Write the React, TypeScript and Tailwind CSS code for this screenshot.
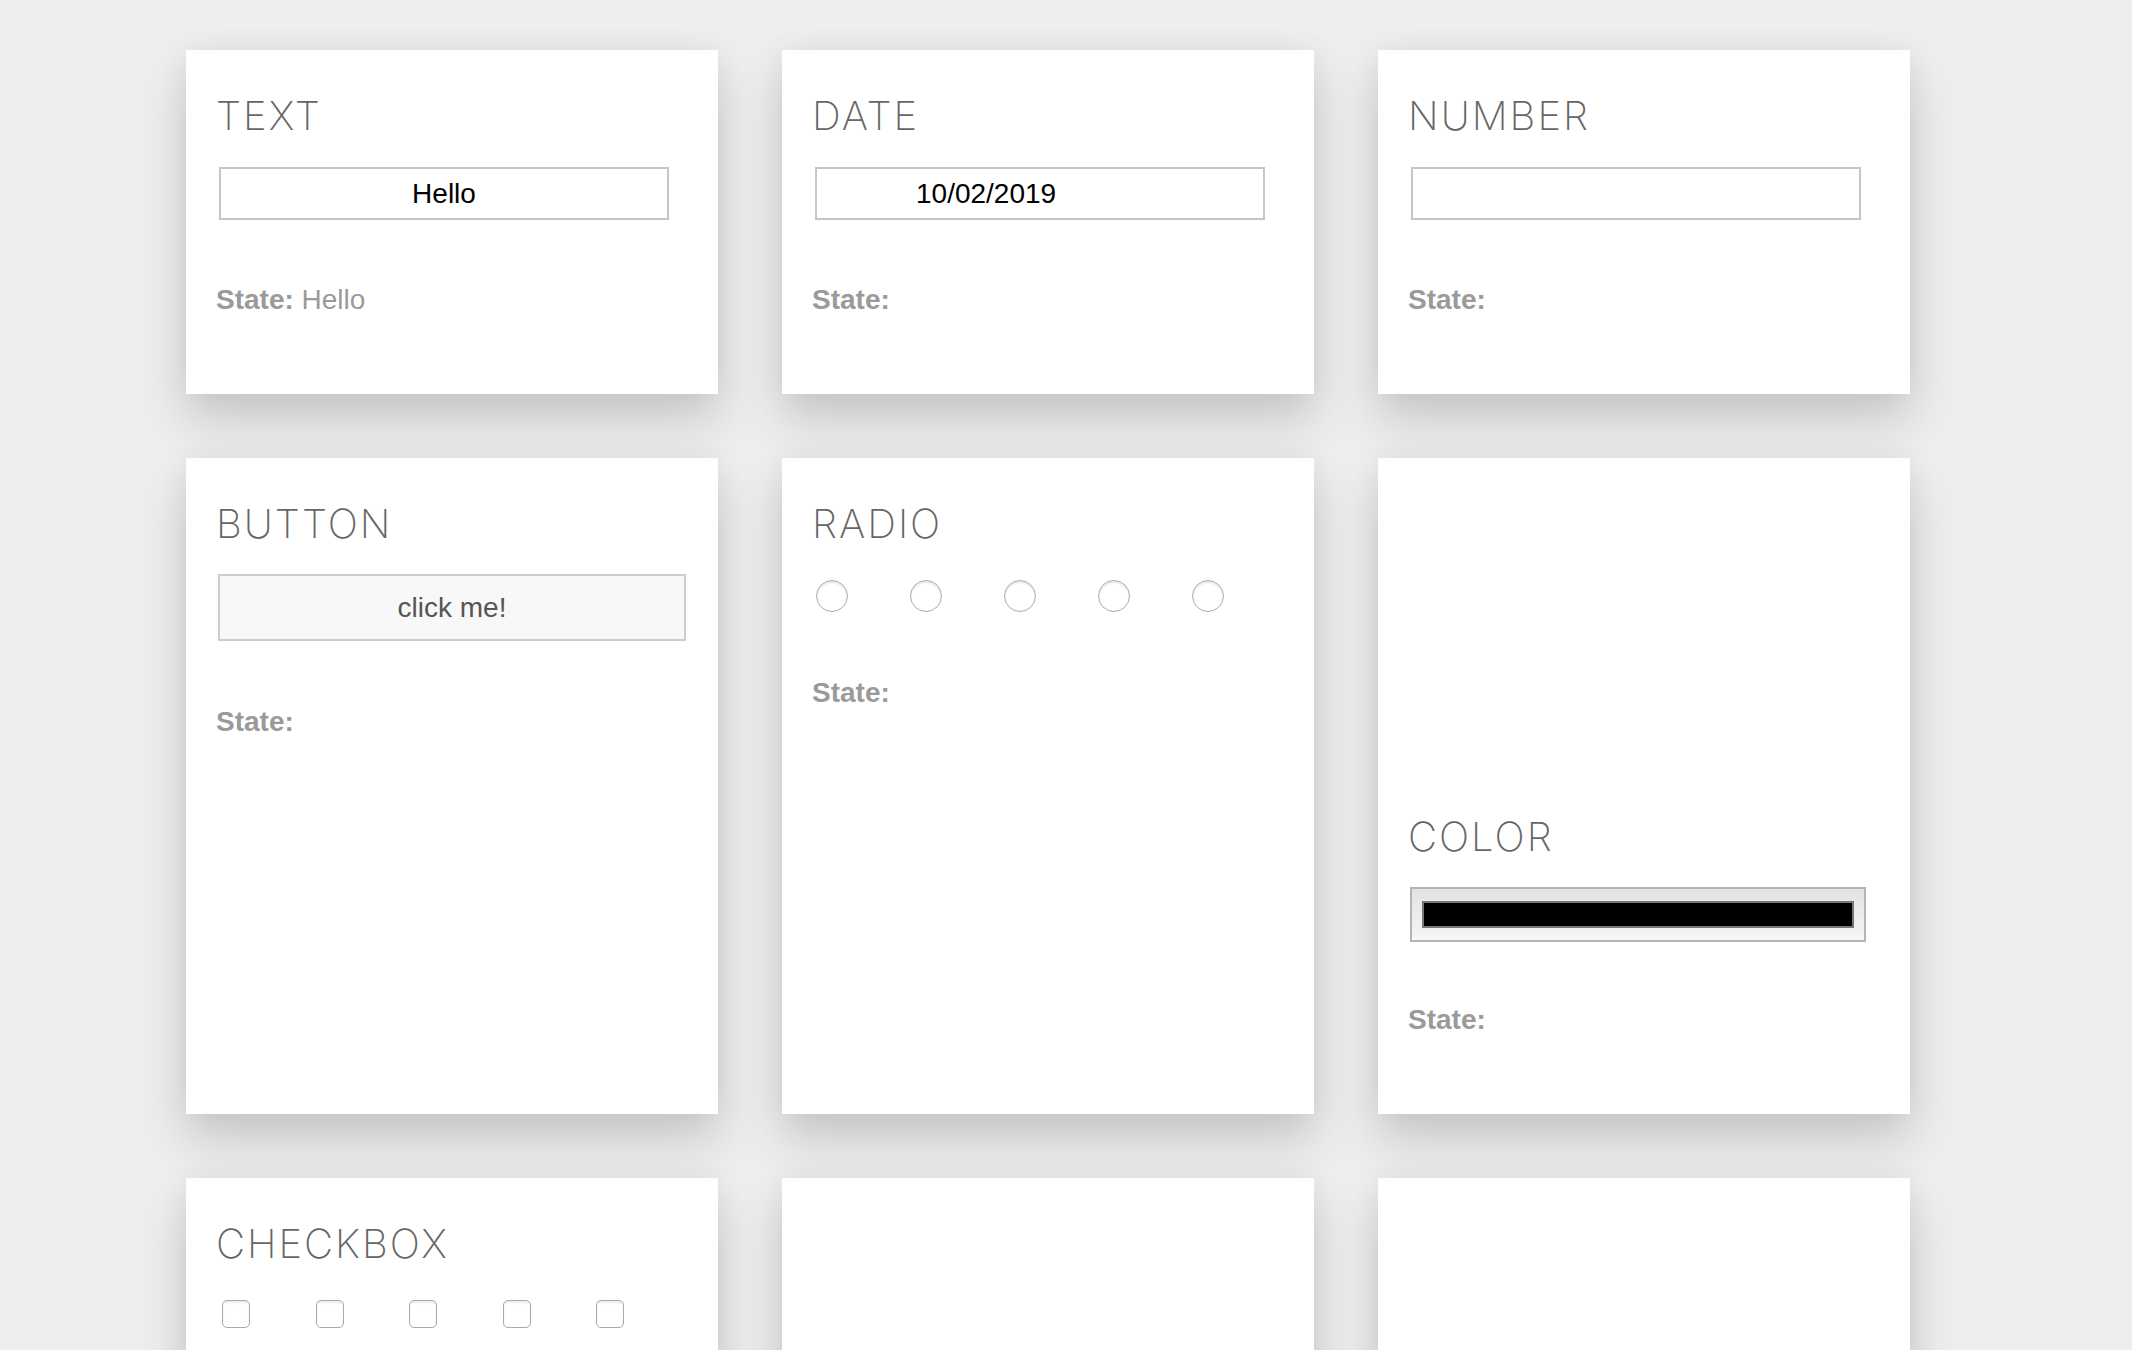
import React from "react";

const titleCls =
  "font-['Inter',sans-serif] font-extralight text-[40px] leading-none tracking-[2px] text-[#666666] uppercase";
const stateCls = "font-['Liberation_Sans',Arial,sans-serif] text-[28px] leading-none text-[#9a9a9a]";
const cardCls =
  "bg-white px-[30px] flex flex-col shadow-[0_26px_46px_rgba(0,0,0,0.16),0_0_30px_rgba(0,0,0,0.05)]";

function State({ value, className = "" }: { value?: string; className?: string }) {
  return (
    <p className={`${stateCls} ${className}`}>
      <span className="font-bold">State:</span>
      {value ? <span> {value}</span> : null}
    </p>
  );
}

function Title({ children }: { children: React.ReactNode }) {
  return <h2 className={`${titleCls} pt-[46px]`}>{children}</h2>;
}

const inputCls =
  "ml-[3px] mt-[31px] w-[450px] h-[53px] border-2 border-[#c6c6c6] bg-white outline-none font-['Liberation_Sans',Arial,sans-serif] text-[28px] text-black";

export default function App() {
  const five = [0, 1, 2, 3, 4];
  return (
    <div className="min-h-screen bg-[#eeeeee] pl-[186px] pt-[50px] overflow-hidden">
      <div className="grid grid-cols-[532px_532px_532px] gap-[64px]">
        {/* ── Row 1 ── */}
        <div className={`${cardCls} h-[344px]`}>
          <Title>Text</Title>
          <input readOnly value="Hello" className={`${inputCls} text-center`} />
          <State value="Hello" className="mt-[66px]" />
        </div>
        <div className={`${cardCls} h-[344px]`}>
          <Title>Date</Title>
          <input readOnly value="10/02/2019" className={`${inputCls} pl-[99px]`} />
          <State className="mt-[66px]" />
        </div>
        <div className={`${cardCls} h-[344px]`}>
          <Title>Number</Title>
          <input readOnly value="" className={inputCls} />
          <State className="mt-[66px]" />
        </div>

        {/* ── Row 2 ── */}
        <div className={`${cardCls} h-[656px]`}>
          <Title>Button</Title>
          <button className="ml-[2px] mt-[30px] w-[468px] h-[67px] border-2 border-[#cccccc] bg-[#f8f8f8] font-['Liberation_Sans',Arial,sans-serif] text-[28px] text-[#555555]">
            click me!
          </button>
          <State className="mt-[67px]" />
        </div>
        <div className={`${cardCls} h-[656px]`}>
          <Title>Radio</Title>
          <div className="mt-[36px] ml-[4px] flex">
            {five.map((i) => (
              <span key={i} className="w-[94px] shrink-0">
                <span className="block w-[32px] h-[32px] rounded-full border-[1.5px] border-[#adadad] bg-white shadow-[inset_0_2px_2px_rgba(0,0,0,0.1)]" />
              </span>
            ))}
          </div>
          <State className="mt-[67px]" />
        </div>
        <div className={`${cardCls} h-[656px] justify-end pb-[80px]`}>
          <h2 className={titleCls}>Color</h2>
          <div className="ml-[2px] mt-[30px] w-[456px] h-[55px] border-2 border-[#b4b4b4] bg-gradient-to-b from-[#e2e2e2] to-[#f6f6f6] flex items-center justify-center">
            <div className="w-[432px] h-[27px] bg-black border-2 border-[#777777]" />
          </div>
          <State className="mt-[64px]" />
        </div>

        {/* ── Row 3 ── */}
        <div className={`${cardCls} h-[300px]`}>
          <Title>Checkbox</Title>
          <div className="mt-[36px] ml-[6px] flex">
            {five.map((i) => (
              <span key={i} className="w-[93.5px] shrink-0">
                <span className="block w-[28px] h-[28px] rounded-[5px] border-[1.5px] border-[#aaaaaa] bg-white shadow-[inset_0_2px_2px_rgba(0,0,0,0.08)]" />
              </span>
            ))}
          </div>
        </div>
        <div className={`${cardCls} h-[300px]`} />
        <div className={`${cardCls} h-[300px]`} />
      </div>
    </div>
  );
}
